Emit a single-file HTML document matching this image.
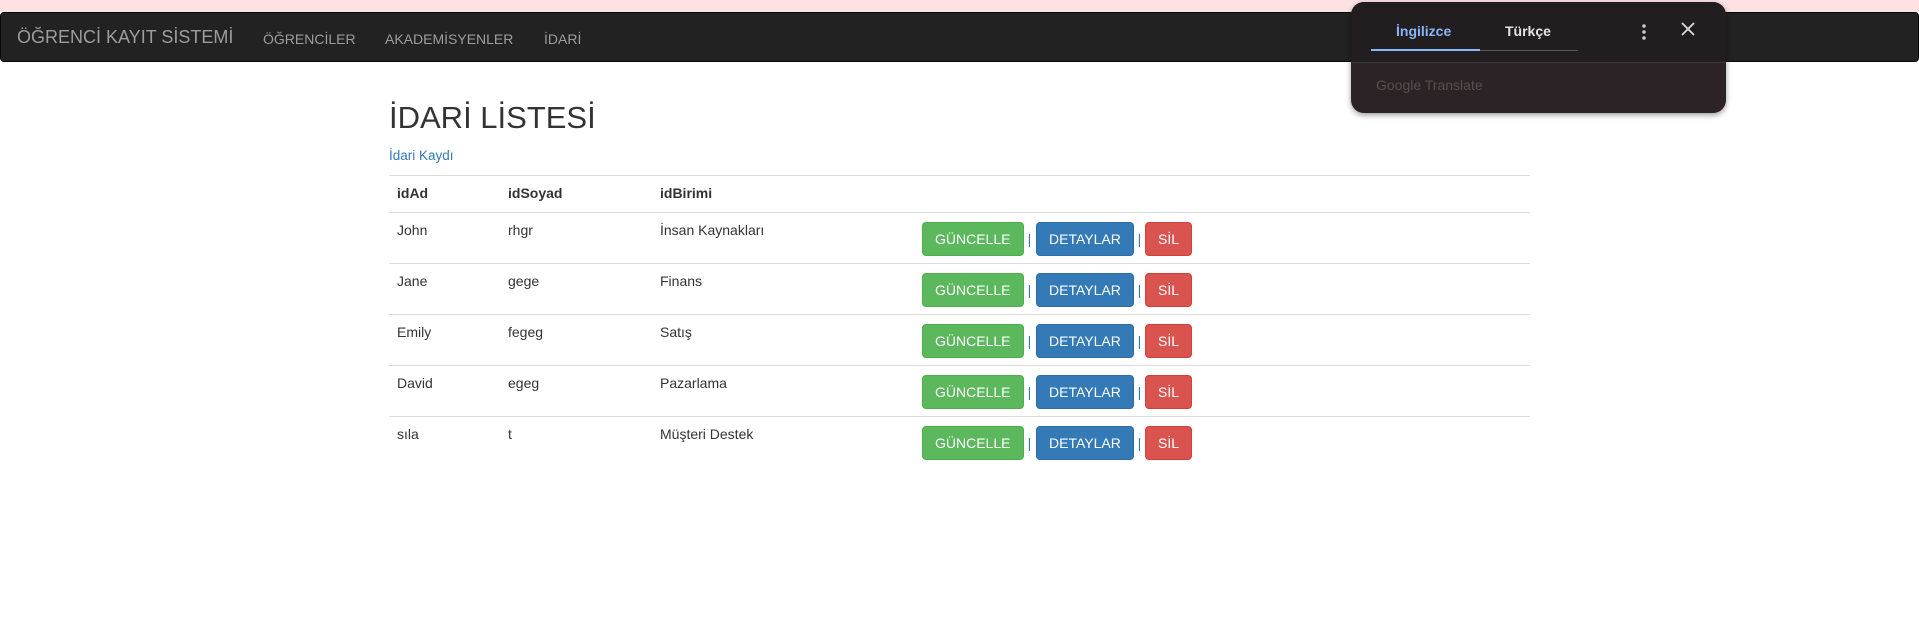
<!DOCTYPE html>
<html><head><meta charset="utf-8"><style>
*{box-sizing:border-box}
body{margin:0;width:1919px;height:629px;overflow:hidden;background:#fff;font-family:"Liberation Sans",Arial,sans-serif;font-size:14px;color:#333;position:relative}
.pink{position:absolute;left:0;top:0;width:1919px;height:12px;background:#fde1e5}
.nav{position:absolute;left:0;top:12px;width:1919px;height:50px;background:#222;border:1px solid #080808;border-radius:4px}
.brand{position:absolute;left:16px;top:14px;font-size:18px;color:#9d9d9d;line-height:20px}
.nl{position:absolute;top:16px;font-size:14px;color:#9d9d9d;line-height:20px}
h1{position:absolute;left:389px;top:98px;margin:0;font-size:31px;font-weight:400;line-height:40px;color:#333}
.add{position:absolute;left:389px;top:146px;color:#337ab7;line-height:20px;font-size:13.5px}
table{position:absolute;left:389px;top:175px;width:1141px;border-collapse:collapse}
td,th{border-top:1px solid #ddd;padding:8px;text-align:left;vertical-align:top;line-height:20px}
th{border-bottom:1px solid #ddd;font-weight:bold;height:37px;padding-top:7px}
tr.r td{height:51px;padding-top:7px;padding-bottom:0}
tr.r td:last-child{padding-top:9px}
.b{display:inline-block;height:34px;padding:0 12px;line-height:32px;color:#fff;border-radius:4px;border:1px solid;vertical-align:top}
.g{background:#5cb85c;border-color:#4cae4c;width:102px}
.bl{background:#337ab7;border-color:#2e6da4;width:98px;margin-left:1px}
.rd{background:#d9534f;border-color:#d43f3a;width:47px}
.sep{display:inline-block;width:11px;text-align:center;color:#337ab7;line-height:34px}
.pop{position:absolute;left:1351px;top:2px;width:375px;height:111px;border-radius:13px;background:#2b2325;box-shadow:0 2px 6px rgba(0,0,0,.4);overflow:hidden}
.pop .top{height:61px;background:#221e1f;border-bottom:1px solid #3c3839;position:relative}
.t{position:absolute;top:21px;font-weight:bold;font-size:14px}
</style></head><body>
<div class="pink"></div>
<div class="nav">
<div class="brand">ÖĞRENCİ KAYIT SİSTEMİ</div>
<div class="nl" style="left:262px">ÖĞRENCİLER</div>
<div class="nl" style="left:384px">AKADEMİSYENLER</div>
<div class="nl" style="left:543px">İDARİ</div>
</div>
<h1>İDARİ LİSTESİ</h1>
<div class="add">İdari Kaydı</div>
<table>
<tr><th style="width:111px">idAd</th><th style="width:152px">idSoyad</th><th style="width:262px">idBirimi</th><th></th></tr>
<tr class="r"><td>John</td><td>rhgr</td><td>İnsan Kaynakları</td><td><span class="b g">GÜNCELLE</span><span class="sep">|</span><span class="b bl">DETAYLAR</span><span class="sep">|</span><span class="b rd">SİL</span></td></tr>
<tr class="r"><td>Jane</td><td>gege</td><td>Finans</td><td><span class="b g">GÜNCELLE</span><span class="sep">|</span><span class="b bl">DETAYLAR</span><span class="sep">|</span><span class="b rd">SİL</span></td></tr>
<tr class="r"><td>Emily</td><td>fegeg</td><td>Satış</td><td><span class="b g">GÜNCELLE</span><span class="sep">|</span><span class="b bl">DETAYLAR</span><span class="sep">|</span><span class="b rd">SİL</span></td></tr>
<tr class="r"><td>David</td><td>egeg</td><td>Pazarlama</td><td><span class="b g">GÜNCELLE</span><span class="sep">|</span><span class="b bl">DETAYLAR</span><span class="sep">|</span><span class="b rd">SİL</span></td></tr>
<tr class="r"><td>sıla</td><td>t</td><td>Müşteri Destek</td><td><span class="b g">GÜNCELLE</span><span class="sep">|</span><span class="b bl">DETAYLAR</span><span class="sep">|</span><span class="b rd">SİL</span></td></tr>
</table>
<div class="pop">
<div class="top">
<div class="t" style="left:45px;color:#8ab4f8">İngilizce</div>
<div class="t" style="left:154px;color:#e8e2e3">Türkçe</div>
<div style="position:absolute;left:20px;top:48px;width:207px;height:1px;background:#5a5657"></div>
<div style="position:absolute;left:20px;top:47px;width:109px;height:2px;background:#8ab4f8"></div>
<svg style="position:absolute;left:286px;top:20px" width="14" height="20"><circle cx="7" cy="4" r="1.8" fill="#ccc"/><circle cx="7" cy="10" r="1.8" fill="#ccc"/><circle cx="7" cy="16" r="1.8" fill="#ccc"/></svg>
<svg style="position:absolute;left:329px;top:19px" width="16" height="16"><path d="M2 2L14 14M14 2L2 14" stroke="#ddd" stroke-width="1.8"/></svg>
</div>
<div style="position:absolute;left:25px;top:75px;font-size:14px;color:#56504f">Google Translate</div>
</div>
</body></html>
